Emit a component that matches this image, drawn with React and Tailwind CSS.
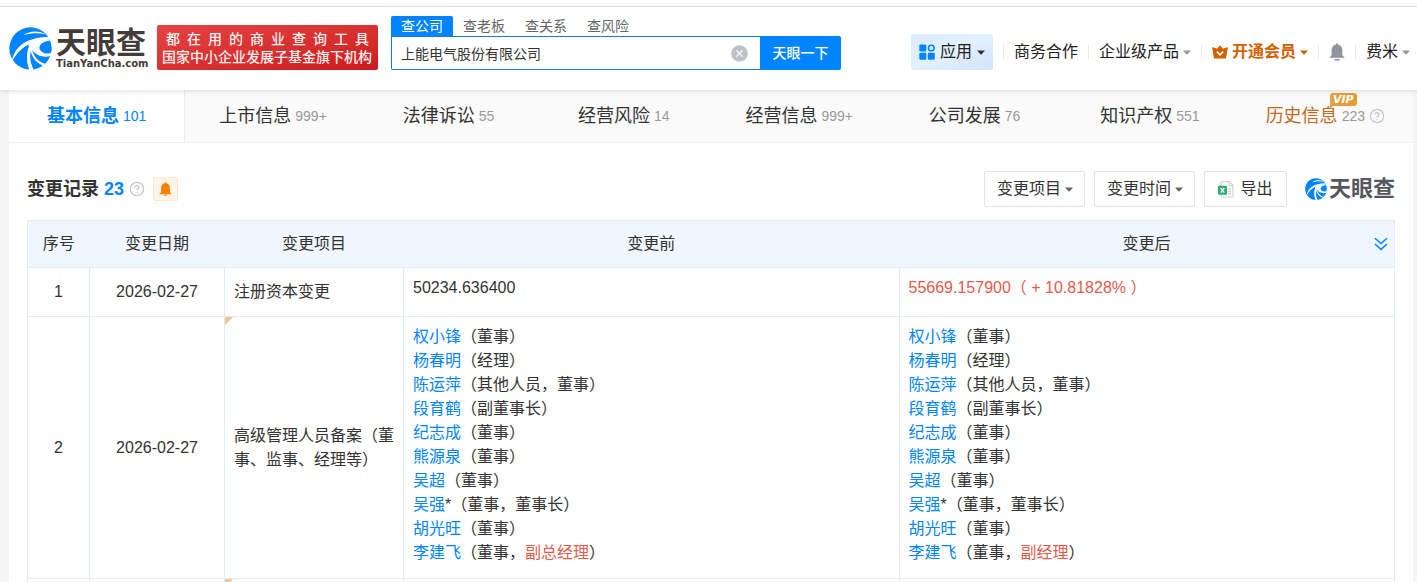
import React from 'react';
import { CircleHelp } from 'lucide-react';

const searchTypes = ['查公司', '查老板', '查关系', '查风险'];

const tabs = [
  { label: '基本信息', count: '101', active: true },
  { label: '上市信息', count: '999+' },
  { label: '法律诉讼', count: '55' },
  { label: '经营风险', count: '14' },
  { label: '经营信息', count: '999+' },
  { label: '公司发展', count: '76' },
  { label: '知识产权', count: '551' },
  { label: '历史信息', count: '223', vip: true },
];

const people = [
  { name: '权小锋', role: '董事' },
  { name: '杨春明', role: '经理' },
  { name: '陈运萍', role: '其他人员，董事' },
  { name: '段育鹤', role: '副董事长' },
  { name: '纪志成', role: '董事' },
  { name: '熊源泉', role: '董事' },
  { name: '吴超', role: '董事' },
  { name: '吴强', mark: '*', role: '董事，董事长' },
  { name: '胡光旺', role: '董事' },
];

const before = [...people, { name: '李建飞', role: '董事，', changed: '副总经理' }];
const after = [...people, { name: '李建飞', role: '董事，', changed: '副经理' }];

// Icons
function LogoMark({ className }) {
  return (
    <svg viewBox="0 0 126 128" className={className} aria-hidden="true">
      <circle cx="63" cy="64" r="63" fill="#0084ff" />
      <path d="M42 24 C60 10 90 10 110 22 C88 17 66 18 42 24Z" fill="#fff" />
      <path d="M8 102 C14 62 48 30 118 30 L122 38 C76 36 32 56 8 102Z" fill="#fff" />
      <path d="M56 54 C72 36 102 32 124 40 C104 42 94 48 90 58 C88 68 96 76 108 79 C116 80 122 78 128 74 L124 86 C104 92 80 86 66 66Z" fill="#fff" />
      <path d="M60 52 C49 80 51 104 60 130 L72 127 C60 102 59 80 68 58Z" fill="#fff" />
      <path d="M66 60 C72 90 88 104 106 109 L100 115 C82 108 68 92 63 70Z" fill="#fff" />
    </svg>
  );
}

function Caret({ className }) {
  return (
    <svg viewBox="0 0 8 5" className={`h-[5px] w-2 shrink-0 ${className}`} aria-hidden="true">
      <path d="M0 0.5 H8 L4.6 4.3 Q4 4.9 3.4 4.3Z" fill="currentColor" />
    </svg>
  );
}

function AppsIcon() {
  return (
    <svg viewBox="0 0 16 16" className="size-4" aria-hidden="true">
      <rect x="0.3" y="0.5" width="7" height="7" rx="1.2" fill="#0084ff" />
      <rect x="0.3" y="8.8" width="7" height="7" rx="1.2" fill="#0084ff" />
      <rect x="8.8" y="8.8" width="7" height="7" rx="1.2" fill="#0084ff" />
      <circle cx="12.3" cy="4" r="2.8" fill="none" stroke="#0084ff" strokeWidth="1.5" />
    </svg>
  );
}

function CrownIcon() {
  return (
    <svg viewBox="0 0 16 16" className="size-4" aria-hidden="true">
      <path
        d="M8 1.2 L11 4.8 L15.1 3.3 Q16 3.1 15.8 4 L14.2 13.4 Q14 14.6 12.8 14.6 H3.2 Q2 14.6 1.8 13.4 L0.2 4 Q0 3.1 0.9 3.3 L5 4.8Z"
        fill="#d46000"
      />
      <path d="M4.8 7.6 L8 10.8 L11.2 7.6" fill="none" stroke="#fff" strokeWidth="1.6" />
    </svg>
  );
}

function BellIcon({ className, bar }) {
  return (
    <svg viewBox="0 0 16 18" className={className} aria-hidden="true">
      <path
        d="M8 0.2 Q9 0.2 9 1.4 Q13.4 2.4 13.4 7.4 V12 Q13.4 13 15.4 14 Q15.8 14.8 15 14.8 H1 Q0.2 14.8 0.6 14 Q2.6 13 2.6 12 V7.4 Q2.6 2.4 7 1.4 Q7 0.2 8 0.2Z"
        fill="currentColor"
      />
      {bar ? (
        <rect x="5.3" y="16" width="5.4" height="1.6" rx="0.6" fill="currentColor" />
      ) : (
        <path d="M5.8 15.5 H10.2 Q9.6 17 8 17 Q6.4 17 5.8 15.5Z" fill="currentColor" />
      )}
    </svg>
  );
}

function ExcelIcon() {
  return (
    <svg viewBox="0 0 16 17" className="h-[17px] w-4" aria-hidden="true">
      <path d="M3 5 V1.6 Q3 0.7 4 0.7 H11.4 L15 4.3 V15 Q15 16 14 16 H4 Q3 16 3 15 V13.6" fill="#fff" stroke="#cdd2d6" strokeWidth="1.2" />
      <path d="M11 0.9 V4.6 H15" fill="none" stroke="#cdd2d6" strokeWidth="1.2" />
      <path d="M10.5 8 H13 M10.5 10.3 H13 M10.5 12.6 H13" stroke="#b6bcc2" />
      <rect x="0" y="4.8" width="9" height="9" rx="1" fill="#27ae72" />
      <path d="M2.7 7 L6.3 11.6 M6.3 7 L2.7 11.6" stroke="#fff" strokeWidth="1.3" />
    </svg>
  );
}

function ClearIcon() {
  return (
    <svg viewBox="0 0 17 17" className="size-[17px]" aria-hidden="true">
      <circle cx="8.5" cy="8.5" r="8.3" fill="#bcc0c8" />
      <path d="M5.4 5.4 L11.6 11.6 M11.6 5.4 L5.4 11.6" stroke="#fff" strokeWidth="1.3" />
    </svg>
  );
}

function ExpandIcon() {
  return (
    <svg viewBox="0 0 14 14" className="size-3.5" fill="none" stroke="currentColor" strokeWidth="1.5" aria-hidden="true">
      <path d="M1 1.2 L7 6.6 L13 1.2 M1 7 L7 12.4 L13 7" />
    </svg>
  );
}

function Divider() {
  return <span className="h-3.5 w-px bg-[#e8e8e8]" />;
}

// Top bar
function Header() {
  return (
    <header className="relative z-10 bg-white pt-[6px] shadow-[0_1px_5px_rgba(0,0,0,0.14)]">
      <div className="flex items-end border-t border-[#e0e0e0] pt-[9px] pr-[7px] pb-5 pl-[9px]">
        <a href="#" className="flex shrink-0 items-center gap-1 text-[#443c3a]">
          <LogoMark className="size-[43px]" />
          <span className="flex w-[91px] flex-col">
            <span className="text-[30px] leading-[30px] font-bold">天眼查</span>
            <span className="font-['DejaVu_Sans'] text-[10px] leading-3 font-bold">TianYanCha.com</span>
          </span>
        </a>

        <div className="ml-[10px] flex w-[221px] shrink-0 flex-col rounded-xs bg-linear-to-br from-[#e64343] to-[#cc1a1c] px-[5px] pt-[5px] pb-1 text-sm leading-[18px] font-medium text-[#fff1ee]">
          <span className="px-1 [text-align-last:justify]">都在用的商业查询工具</span>
          <span className="whitespace-nowrap">国家中小企业发展子基金旗下机构</span>
        </div>

        <form className="ml-[13px] w-[450px] min-w-0 text-sm" onSubmit={(e) => e.preventDefault()}>
          <div className="flex leading-5">
            {searchTypes.map((type, i) => (
              <button
                key={type}
                type="button"
                className={`px-[10px] ${i === 0 ? 'rounded-t-xs bg-[#0084ff] text-white' : 'text-[#666]'}`}
              >
                {type}
              </button>
            ))}
          </div>
          <div className="flex h-[34px]">
            <div className="flex min-w-0 flex-1 items-center rounded-bl-xs border border-r-0 border-[#1c7bd0] pr-3 pl-[9px]">
              <input
                aria-label="搜索公司"
                defaultValue="上能电气股份有限公司"
                className="h-full min-w-0 flex-1 text-[#333] outline-none"
              />
              <button type="button" aria-label="清除">
                <ClearIcon />
              </button>
            </div>
            <button className="w-[81px] rounded-r-xs bg-[#0084ff] font-medium text-white">天眼一下</button>
          </div>
        </form>

        <nav className="ml-auto flex h-9 shrink-0 items-center gap-[10px] text-base text-[#222]">
          <button className="flex h-9 items-center rounded-xs bg-linear-to-br from-[#dcedff] via-[#e2f0ff] to-[#d3e3fa] px-2">
            <AppsIcon />
            <span className="mx-[5px]">应用</span>
            <Caret className="text-[#333]" />
          </button>
          <Divider />
          <a href="#">商务合作</a>
          <Divider />
          <button className="flex items-center gap-1">
            企业级产品
            <Caret className="text-[#999]" />
          </button>
          <Divider />
          <button className="flex items-center gap-1 font-bold text-[#d46000]">
            <CrownIcon />
            开通会员
            <Caret className="text-[#d46000]" />
          </button>
          <Divider />
          <button aria-label="消息">
            <BellIcon className="h-[18px] w-4 text-[#8f959b]" bar />
          </button>
          <Divider />
          <button className="flex items-center gap-1">
            费米
            <Caret className="text-[#999]" />
          </button>
        </nav>
      </div>
    </header>
  );
}

function VipBadge() {
  return (
    <span className="absolute -top-[10px] -right-[19px] rounded-[3px] bg-linear-to-r from-[#e3a04b] to-[#e89a2c] px-[3px] font-['DejaVu_Sans'] text-[11px] leading-[13px] font-bold text-white italic">
      VIP
      <span className="absolute top-3 left-0 size-1 bg-[#e3a04b] [clip-path:polygon(0_0,100%_0,0_100%)]" />
    </span>
  );
}

function TabBar() {
  return (
    <nav className="flex border-b border-[#f0f0f0] bg-[#fafafa]">
      {tabs.map((tab) => (
        <a
          key={tab.label}
          href="#"
          className={`flex flex-1 items-center justify-center gap-1 py-[13px] text-lg leading-[26px] ${
            tab.active ? 'border-r border-[#eee] bg-white text-[#0084ff]' : 'text-[#333]'
          }`}
        >
          <span className={`relative ${tab.active ? 'font-bold' : ''} ${tab.vip ? 'text-[#c4691c]' : ''}`}>
            {tab.label}
            {tab.vip && <VipBadge />}
          </span>
          <span className={`text-sm leading-[26px] ${tab.active ? '' : 'text-[#999]'}`}>{tab.count}</span>
          {tab.vip && <CircleHelp className="size-4 text-[#c0c4cc]" strokeWidth={1.8} />}
        </a>
      ))}
    </nav>
  );
}

function FilterSelect({ label }) {
  return (
    <span className="relative">
      <select
        aria-label={label}
        className="h-9 w-[101px] appearance-none rounded-xs border border-[#dfe3e8] bg-white pl-3 text-base text-[#333]"
      >
        <option>{label}</option>
      </select>
      <Caret className="pointer-events-none absolute top-4 right-3 text-[#666]" />
    </span>
  );
}

function SectionTitle() {
  return (
    <div className="flex items-center pt-7 pb-[13px]">
      <h2 className="text-lg leading-6 font-bold text-[#333]">
        变更记录 <span className="text-[#0084ff]">23</span>
      </h2>
      <CircleHelp className="ml-[5px] size-4 text-[#c0c4cc]" strokeWidth={1.8} />
      <button
        aria-label="监控"
        className="ml-2 flex h-6 w-[25px] items-center justify-center rounded-xs border border-[#fbe6d0] bg-[#fff4ea] text-[#ff8000]"
      >
        <BellIcon className="h-[15px] w-[13px]" />
      </button>

      <div className="ml-auto flex items-center gap-[9px]">
        <FilterSelect label="变更项目" />
        <FilterSelect label="变更时间" />
        <button className="flex h-9 w-[83px] items-center justify-center gap-[6px] rounded-xs border border-[#dfe3e8] text-base text-[#333]">
          <ExcelIcon />
          导出
        </button>
        <span className="ml-[9px] flex items-center gap-[2px] text-[22px] leading-6 font-bold text-[#55585e]">
          <LogoMark className="size-[22px]" />
          天眼查
        </span>
      </div>
    </div>
  );
}

function PersonList({ list }) {
  return (
    <ul>
      {list.map((p) => (
        <li key={p.name}>
          <a href="#" className="text-[#0084ff]">
            {p.name}
          </a>
          {p.mark}（{p.role}
          {p.changed && <span className="text-[#e45b4b]">{p.changed}</span>}）
        </li>
      ))}
    </ul>
  );
}

function Corner() {
  return <span className="absolute top-0 left-0 size-2 bg-[#f0c694] [clip-path:polygon(0_0,100%_0,0_100%)]" />;
}

// Change records
function RecordTable() {
  const cell = 'border border-[#e1ecf3] px-[9px]';
  const detail = `${cell} pt-2 pb-[13px] align-top`;

  return (
    <table className="w-full table-fixed border-collapse border border-[#e1ecf3] text-base leading-6 text-[#333]">
      <colgroup>
        <col className="w-[62px]" />
        <col className="w-[135px]" />
        <col className="w-[179px]" />
        <col />
        <col />
      </colgroup>
      <thead className="bg-[#eff6fd]">
        <tr className="h-[47px]">
          <th className="font-normal">序号</th>
          <th className="font-normal">变更日期</th>
          <th className="font-normal">变更项目</th>
          <th className="font-normal">变更前</th>
          <th className="relative font-normal">
            变更后
            <button aria-label="展开" className="absolute top-4 right-[6px] text-[#0084ff]">
              <ExpandIcon />
            </button>
          </th>
        </tr>
      </thead>
      <tbody>
        <tr className="h-[49px]">
          <td className={`${cell} text-center`}>1</td>
          <td className={`${cell} text-center`}>2026-02-27</td>
          <td className={cell}>注册资本变更</td>
          <td className={detail}>50234.636400</td>
          <td className={`${detail} text-[#e45b4b]`}>55669.157900（ + 10.81828% ）</td>
        </tr>
        <tr>
          <td className={`${cell} text-center`}>2</td>
          <td className={`${cell} text-center`}>2026-02-27</td>
          <td className={`${cell} relative`}>
            <Corner />
            高级管理人员备案（董事、监事、经理等）
          </td>
          <td className={detail}>
            <PersonList list={before} />
          </td>
          <td className={detail}>
            <PersonList list={after} />
          </td>
        </tr>
        <tr className="h-12">
          <td className={cell} />
          <td className={cell} />
          <td className={`${cell} relative`}>
            <Corner />
          </td>
          <td className={cell} />
          <td className={cell} />
        </tr>
      </tbody>
    </table>
  );
}

export default function App() {
  return (
    <div className="min-h-screen bg-[#f5f5f5] font-['Liberation_Sans','Noto_Sans_CJK_SC',sans-serif]">
      <Header />
      <main className="pr-1 pl-[9px]">
        <div className="bg-white">
          <TabBar />
          <div className="px-[18px]">
            <SectionTitle />
            <RecordTable />
          </div>
        </div>
      </main>
    </div>
  );
}
